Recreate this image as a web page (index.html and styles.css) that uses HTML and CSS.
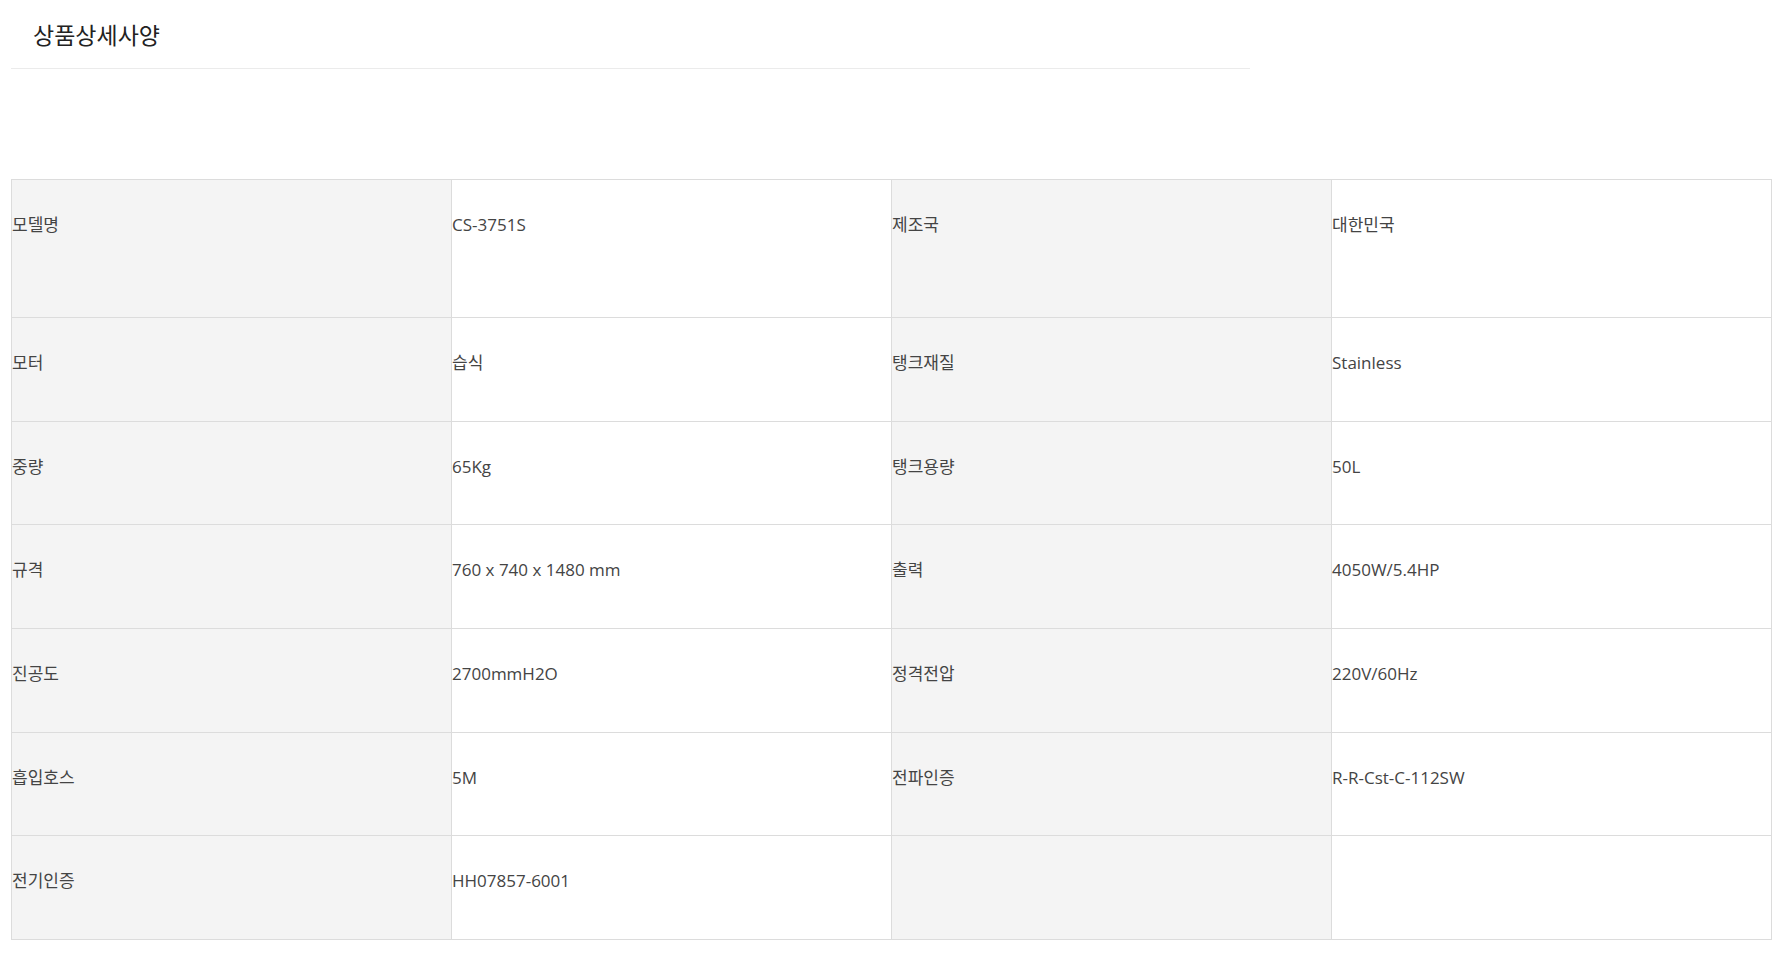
FILE: index.html
```html
<!DOCTYPE html>
<html lang="ko">
<head>
<meta charset="utf-8">
<title>상품상세사양</title>
<link rel="stylesheet" href="styles.css">
</head>
<body>
<div class="page">
  <div class="head">
    <h2 class="head-title">상품상세사양</h2>
  </div>
  <table class="spec">
    <colgroup><col class="c"><col class="c"><col class="c"><col class="c"></colgroup>
    <tbody>
      <tr class="first"><th>모델명</th><td>CS-3751S</td><th>제조국</th><td>대한민국</td></tr>
      <tr><th>모터</th><td>습식</td><th>탱크재질</th><td>Stainless</td></tr>
      <tr><th>중량</th><td>65Kg</td><th>탱크용량</th><td>50L</td></tr>
      <tr><th>규격</th><td>760 x 740 x 1480 mm</td><th>출력</th><td>4050W/5.4HP</td></tr>
      <tr><th>진공도</th><td>2700mmH2O</td><th>정격전압</th><td>220V/60Hz</td></tr>
      <tr><th>흡입호스</th><td>5M</td><th>전파인증</th><td>R-R-Cst-C-112SW</td></tr>
      <tr><th>전기인증</th><td>HH07857-6001</td><th></th><td></td></tr>
    </tbody>
  </table>
</div>
</body>
</html>
```
FILE: styles.css
```css
html, body {
  margin: 0;
  padding: 0;
  background: #fff;
}
body {
  font-family: "Noto Sans CJK KR", "Noto Sans", sans-serif;
  color: #333;
}
.page {
  padding: 0 0 0 11px;
}
.head {
  width: 1239px;
  border-bottom: 1px solid #ebebeb;
  padding: 18px 0 18px 22px;
  box-sizing: border-box;
  height: 69px;
}
.head-title {
  margin: 0;
  font-size: 23px;
  line-height: 32px;
  font-weight: 400;
  color: #222;
}
.spec {
  margin-top: 110px;
  width: 1761px;
  border-collapse: collapse;
  table-layout: fixed;
}
.spec .c {
  width: 25%;
}
.spec th,
.spec td {
  border: 1px solid #dcdcdc;
  padding: 33px 0 0 0;
  vertical-align: top;
  text-align: left;
  font-family: "Open Sans", "Noto Sans CJK KR", sans-serif;
  font-size: 17px;
  line-height: 24px;
  font-weight: 400;
  color: #444;
  height: 69.65px;
}
.spec th {
  background: #f4f4f4;
}
.spec tr.first th,
.spec tr.first td {
  height: 104px;
}
```
